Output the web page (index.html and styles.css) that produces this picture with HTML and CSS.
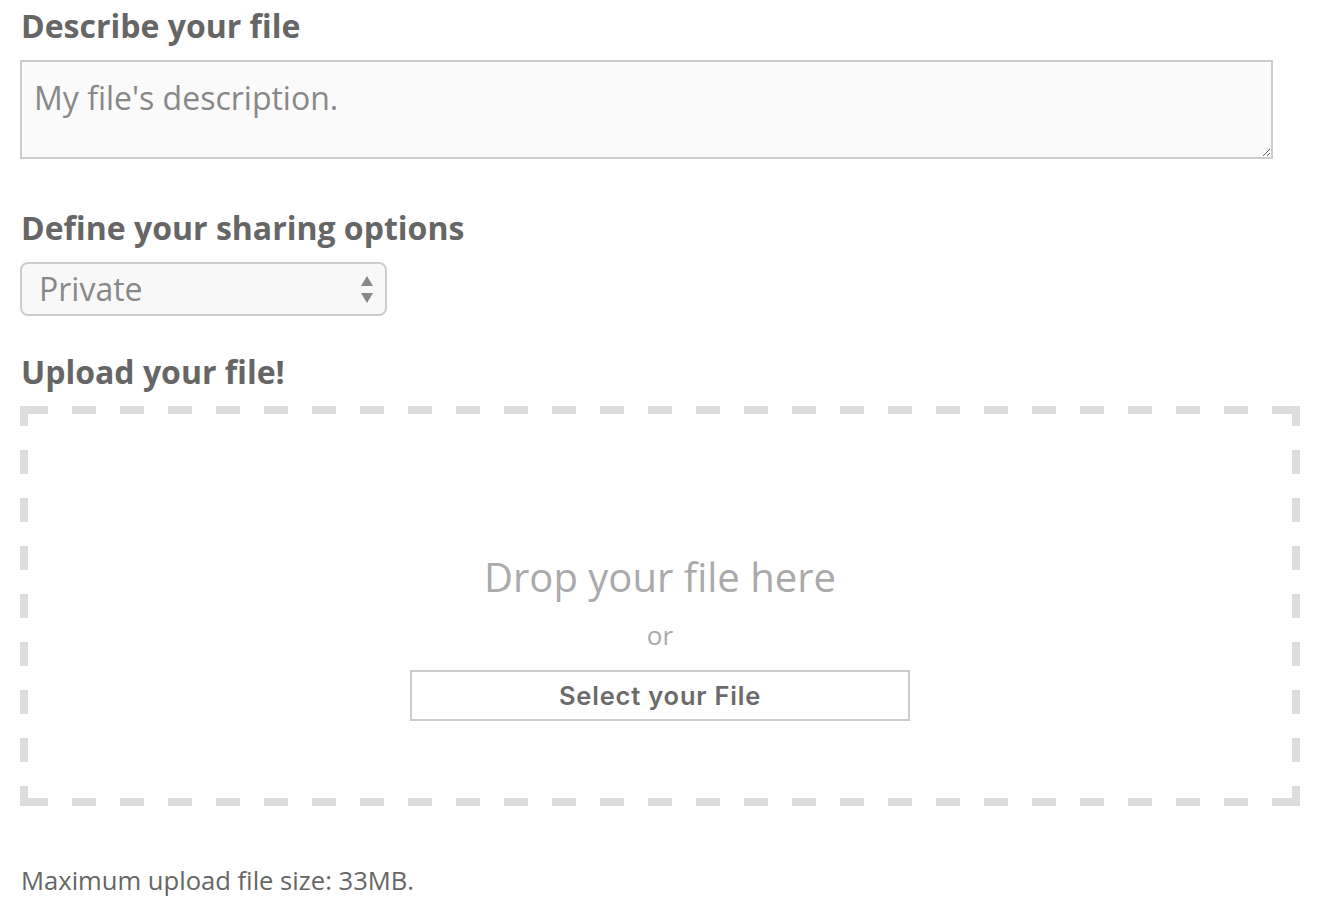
FILE: index.html
```html
<!DOCTYPE html>
<html>
<head>
<meta charset="utf-8">
<link rel="stylesheet" href="styles.css">
</head>
<body>
<form class="form">
  <h2 class="label">Describe your file</h2>
  <textarea class="desc" placeholder="My file's description."></textarea>

  <h2 class="label label-share">Define your sharing options</h2>
  <div class="select">
    <span class="select-value">Private</span>
    <svg class="select-arrows" width="12" height="27" viewBox="0 0 12 27">
      <polygon points="6,0 12,10 0,10" fill="#888"/>
      <polygon points="0,17 12,17 6,27" fill="#888"/>
    </svg>
  </div>

  <h2 class="label label-upload">Upload your file!</h2>
  <div class="dropzone">
    <div class="drop-title">Drop your file here</div>
    <div class="drop-or">or</div>
    <button type="button" class="drop-btn">Select your File</button>
  </div>

  <p class="note">Maximum upload file size: 33MB.</p>
</form>
</body>
</html>
```

FILE: styles.css
```css
html, body {
  margin: 0;
  padding: 0;
  background: #fff;
}
body {
  font-family: "Open Sans", "Liberation Sans", sans-serif;
  color: #666;
}
.form {
  display: flex;
  flex-direction: column;
  align-items: flex-start;
  padding: 4px 18px 0 20px;
}
.label {
  margin: 0;
  font-size: 32px;
  font-weight: 700;
  line-height: 44px;
  color: #666;
  padding-left: 1px;
}
.desc {
  box-sizing: border-box;
  margin-top: 12px;
  width: 1253px;
  height: 99px;
  border: 2px solid #ccc;
  background: #fafafa;
  font-family: "Open Sans", "Liberation Sans", sans-serif;
  font-size: 32px;
  line-height: 44px;
  padding: 14px 12px 10px;
  color: #888;
  resize: vertical;
  outline: none;
}
.desc::placeholder {
  color: #888;
}
.label-share {
  margin-top: 47px;
}
.select {
  box-sizing: border-box;
  margin-top: 12px;
  width: 367px;
  height: 54px;
  border: 2px solid #ccc;
  border-radius: 8px;
  background: #f8f8f8;
  display: flex;
  align-items: center;
  justify-content: space-between;
  padding: 0 12px 0 17px;
}
.select-value {
  font-size: 32px;
  line-height: 44px;
  color: #888;
}
.select-arrows {
  display: block;
  margin-top: 1px;
}
.label-upload {
  margin-top: 34px;
}
.dropzone {
  box-sizing: border-box;
  margin-top: 12px;
  width: 1280px;
  height: 400px;
  padding: 144px 8px 8px;
  display: flex;
  flex-direction: column;
  align-items: center;
  background-image:
    linear-gradient(to right, #ddd 24px, transparent 24px),
    linear-gradient(to right, #ddd 24px, transparent 24px),
    linear-gradient(to bottom, #ddd 24px, transparent 24px),
    linear-gradient(to bottom, #ddd 24px, transparent 24px);
  background-size: 48px 8px, 48px 8px, 8px 48px, 8px 48px;
  background-repeat: repeat-x, repeat-x, repeat-y, repeat-y;
  background-position: 4px 0, 4px 100%, 0 -4px, 100% -4px;
}
.drop-title {
  font-size: 40px;
  line-height: 54px;
  color: #aaa;
}
.drop-or {
  margin-top: 13px;
  font-size: 26px;
  line-height: 36px;
  color: #aaa;
}
.drop-btn {
  margin-top: 17px;
  box-sizing: border-box;
  width: 500px;
  height: 51px;
  border: 2px solid #ccc;
  background: #fff;
  font-family: Inter, "Noto Sans", sans-serif;
  font-size: 25.5px;
  font-weight: 600;
  color: #6b6b6b;
  letter-spacing: 0.8px;
  padding: 0;
  cursor: pointer;
}
.note {
  margin: 57px 0 0 1px;
  font-size: 25.6px;
  line-height: 36px;
  color: #666;
}
```
